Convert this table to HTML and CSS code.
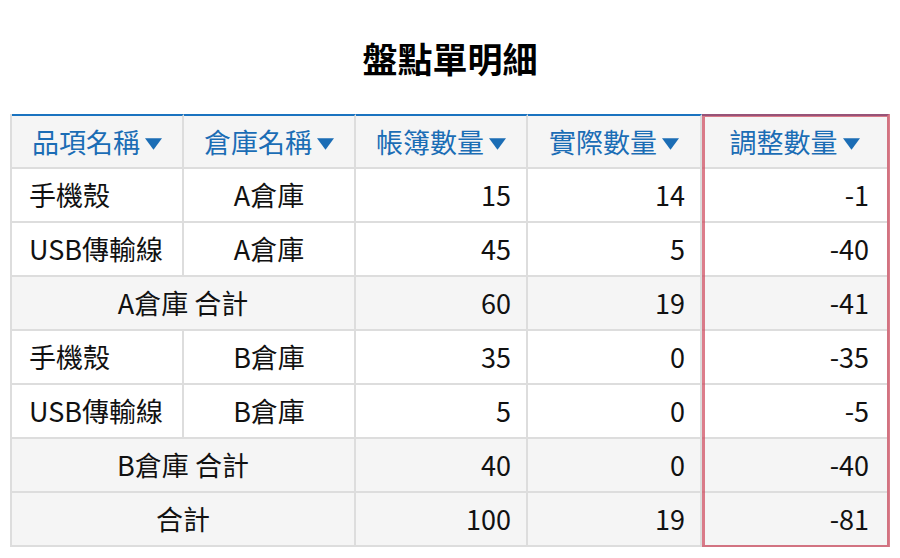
FILE: index.html
```html
<!DOCTYPE html>
<html lang="zh-Hant">
<head>
<meta charset="utf-8">
<title>盤點單明細</title>
<link rel="stylesheet" href="styles.css">
</head>
<body>
<h1 class="title">盤點單明細</h1>
<div class="table-wrap">
  <table class="grid">
    <thead>
      <tr>
        <th class="c1">品項名稱<svg class="sort" viewBox="0 0 16 11"><polygon points="0,0 16,0 8,11"/></svg></th>
        <th class="c2">倉庫名稱<svg class="sort" viewBox="0 0 16 11"><polygon points="0,0 16,0 8,11"/></svg></th>
        <th class="c3">帳簿數量<svg class="sort" viewBox="0 0 16 11"><polygon points="0,0 16,0 8,11"/></svg></th>
        <th class="c4">實際數量<svg class="sort" viewBox="0 0 16 11"><polygon points="0,0 16,0 8,11"/></svg></th>
        <th class="c5">調整數量<svg class="sort" viewBox="0 0 16 11"><polygon points="0,0 16,0 8,11"/></svg></th>
      </tr>
    </thead>
    <tbody>
      <tr><td class="left">手機殼</td><td class="center">A倉庫</td><td class="num">15</td><td class="num">14</td><td class="num last">-1</td></tr>
      <tr><td class="left">USB傳輸線</td><td class="center">A倉庫</td><td class="num">45</td><td class="num">5</td><td class="num last">-40</td></tr>
      <tr class="sub"><td class="center" colspan="2">A倉庫 合計</td><td class="num">60</td><td class="num">19</td><td class="num last">-41</td></tr>
      <tr><td class="left">手機殼</td><td class="center">B倉庫</td><td class="num">35</td><td class="num">0</td><td class="num last">-35</td></tr>
      <tr><td class="left">USB傳輸線</td><td class="center">B倉庫</td><td class="num">5</td><td class="num">0</td><td class="num last">-5</td></tr>
      <tr class="sub"><td class="center" colspan="2">B倉庫 合計</td><td class="num">40</td><td class="num">0</td><td class="num last">-40</td></tr>
      <tr class="sub"><td class="center" colspan="2">合計</td><td class="num">100</td><td class="num">19</td><td class="num last">-81</td></tr>
    </tbody>
  </table>
  <div class="highlight"></div>
</div>
</body>
</html>
```

FILE: styles.css
```css
html, body {
  margin: 0;
  padding: 0;
  background: #ffffff;
}

body {
  font-family: "Noto Sans CJK TC", "Noto Sans", sans-serif;
  color: #111111;
  padding-top: 37px;
}

.title {
  margin: 0 0 35px 0;
  height: 42px;
  line-height: 42px;
  font-size: 35px;
  font-weight: 700;
  text-align: center;
  color: #000000;
}

.table-wrap {
  position: relative;
  margin-left: 10px;
  width: 879px;
}

.grid {
  border-collapse: separate;
  border-spacing: 0;
  table-layout: fixed;
  width: 879px;
  border-left: 2px solid #dddddd;
  font-size: 27px;
}

.grid th,
.grid td {
  box-sizing: border-box;
  border-right: 2px solid #dddddd;
  border-bottom: 2px solid #dddddd;
  padding: 0 15px;
  line-height: 30px;
  white-space: nowrap;
}

.grid th {
  height: 55px;
  border-top: 2px solid #1a73c0;
  background: #f5f5f5;
  color: #1b6db5;
  font-weight: 400;
  text-align: center;
}

.grid th.c1 { width: 172px; }
.grid th.c2 { width: 172px; }
.grid th.c3 { width: 172px; }
.grid th.c4 { width: 174px; }
.grid th.c5 { width: 187px; }

.sort {
  width: 17px;
  height: 12px;
  margin-left: 5px;
  vertical-align: 3px;
  fill: #1b6db5;
}

.grid td {
  height: 54px;
  background: #ffffff;
}

.grid tr.sub td {
  background: #f5f5f5;
}

.left { text-align: left; }
.grid td.left { padding-left: 17px; }
.center { text-align: center; }
.num { text-align: right; }
.grid td.last { padding-right: 18px; }

.highlight {
  position: absolute;
  left: 692px;
  top: 0;
  width: 188px;
  height: 434px;
  box-sizing: border-box;
  border: 3.5px solid rgba(205, 70, 90, 0.7);
  pointer-events: none;
}
```
